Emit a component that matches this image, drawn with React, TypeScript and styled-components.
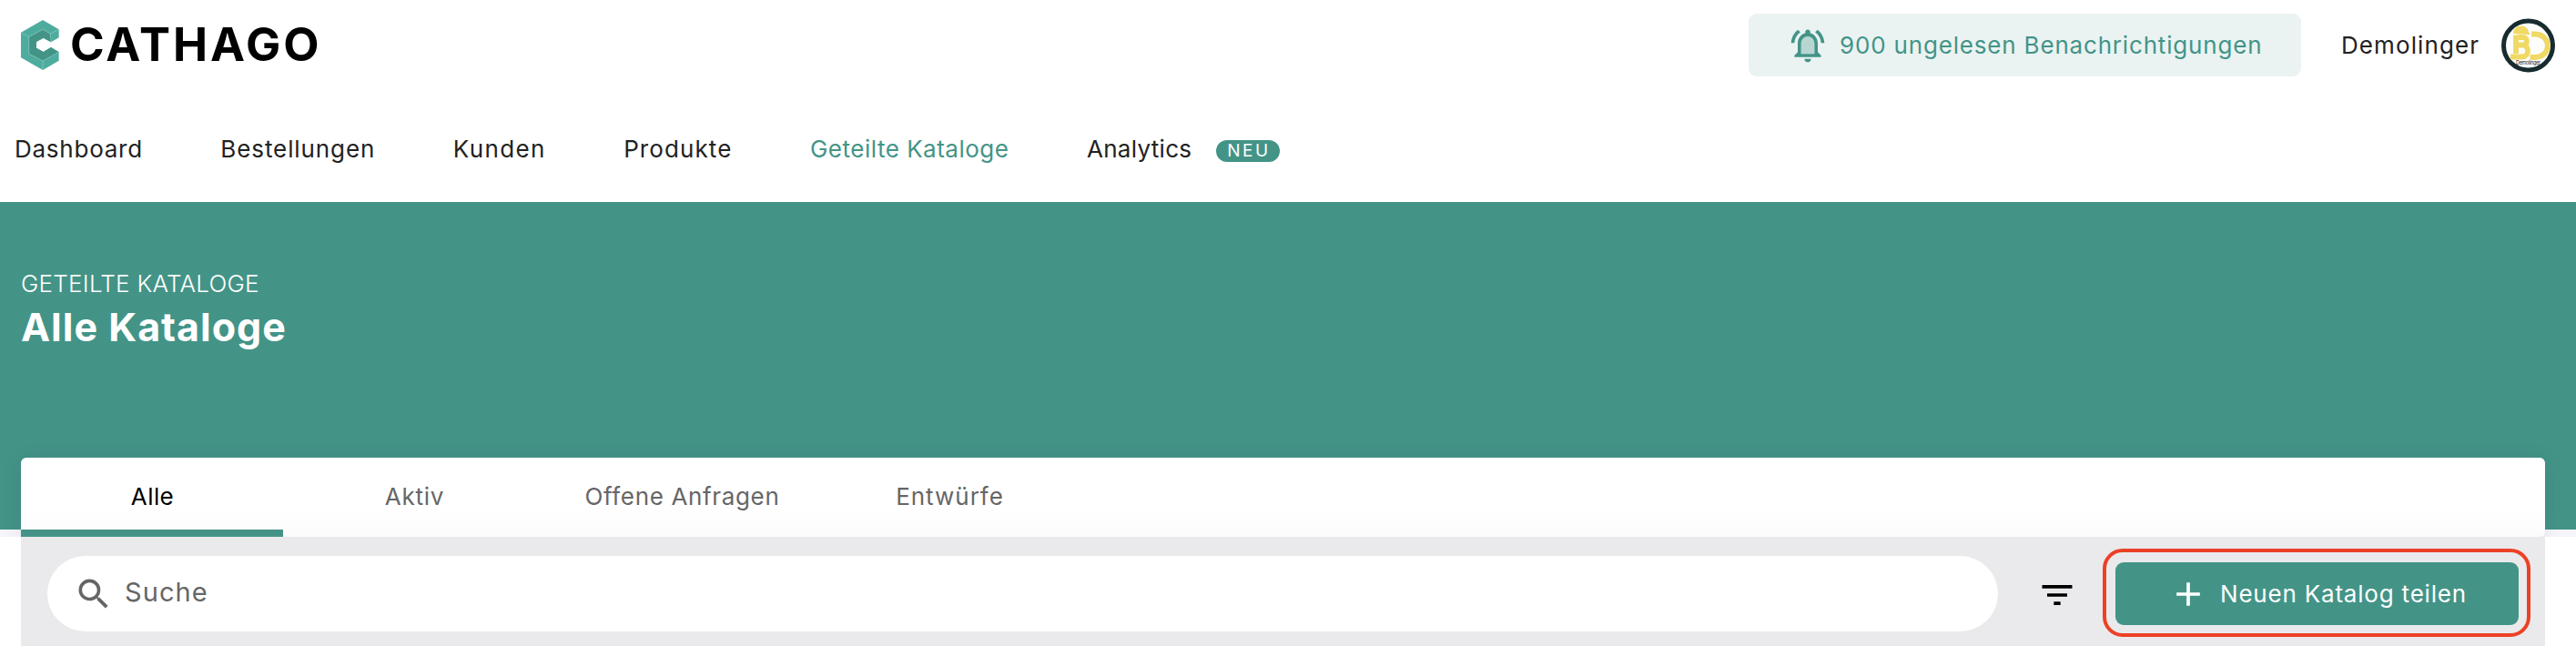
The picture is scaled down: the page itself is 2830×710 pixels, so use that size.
import React, { useState } from "react";
import styled, { createGlobalStyle } from "styled-components";
import { MdAdd, MdFilterList, MdSearch } from "react-icons/md";

interface INavItem {
  label: string;
  spacing: number;
  badge?: string;
}

interface ITab {
  label: string;
  width: number;
  spacing: number;
}

const GlobalStyle = createGlobalStyle`
  * {
    box-sizing: border-box;
  }
  body {
    margin: 0;
    background-color: white;
    font-family: "Inter", sans-serif;
    font-size: 26px;
    line-height: 1.2;
    color: #222;
  }
  button {
    border: none;
    background: none;
    padding: 0;
    font: inherit;
    color: inherit;
  }
`;

const Page = styled.div`
  height: 710px;
  overflow: hidden;
`;

const TopBar = styled.header`
  height: 99px;
  padding: 0 23px 0 22px;
  display: flex;
  align-items: center;
`;

const Brand = styled.div`
  display: flex;
  align-items: center;
  margin-right: auto;
`;

const BrandName = styled.span`
  margin: -1px 0 0 11px;
  font-size: 51px;
  font-weight: 700;
  letter-spacing: 3px;
  color: black;
`;

const Notifications = styled.button`
  width: 607px;
  height: 69px;
  padding-left: 43px;
  display: flex;
  align-items: center;
  gap: 13px;
  border-radius: 9px;
  background-color: #eaf3f2;
  color: #439487;
  letter-spacing: 0.82px;
  white-space: nowrap;
`;

const UserName = styled.span`
  width: 176px;
  margin-left: 44px;
  letter-spacing: 1.1px;
`;

const Nav = styled.nav`
  height: 123px;
  padding: 7px 0 0 16px;
  display: flex;
  align-items: center;
  gap: 85.5px;
`;

const NavItem = styled.a<{ $active: boolean; $spacing: number }>`
  display: flex;
  align-items: center;
  color: ${(p) => (p.$active ? "#439487" : "#222")};
  letter-spacing: ${(p) => p.$spacing}px;
  white-space: nowrap;
`;

const Badge = styled.span`
  width: 70px;
  height: 24px;
  margin: 4px 0 0 27px;
  padding-left: 12px;
  border-radius: 12px;
  background-color: #439487;
  color: white;
  font-size: 19px;
  line-height: 23px;
  letter-spacing: 2.4px;
`;

const Hero = styled.section`
  height: 368px;
  padding: 0 34px 0 23px;
  display: flex;
  flex-direction: column;
  overflow: hidden;
  background: linear-gradient(#439487 360px, #f6f5fa 360px);
`;

const Overline = styled.div`
  margin-top: 75px;
  font-weight: 300;
  line-height: 30px;
  letter-spacing: 0.25px;
  color: white;
`;

const Title = styled.h1`
  margin: 7px 0 0;
  font-size: 43px;
  font-weight: 700;
  line-height: 50px;
  letter-spacing: 1px;
  color: white;
`;

const Tabs = styled.div`
  height: 87px;
  margin-top: auto;
  display: flex;
  border-radius: 6px 6px 6px 0;
  background: linear-gradient(white 60%, #fcfcfc);
  box-shadow: 0 2px 20px rgba(50, 40, 80, 0.12);
`;

const Tab = styled.button<{ $active: boolean; $width: number; $spacing: number }>`
  width: ${(p) => p.$width}px;
  padding: 6px 0 0 1px;
  border-bottom: 8px solid ${(p) => (p.$active ? "#439487" : "transparent")};
  color: ${(p) => (p.$active ? "black" : "#666")};
  letter-spacing: ${(p) => p.$spacing}px;
`;

const Toolbar = styled.section`
  height: 120px;
  margin: 0 34px 0 23px;
  padding: 13px 16px 10px 29px;
  display: flex;
  align-items: center;
  background-color: #eaeaec;
`;

const SearchField = styled.label`
  width: 2143px;
  height: 83px;
  margin-top: 2px;
  padding-left: 28.5px;
  display: flex;
  align-items: center;
  gap: 12.5px;
  border-radius: 42px;
  background-color: white;
  color: #666;
`;

const SearchInput = styled.input`
  flex: 1;
  margin-top: -4px;
  padding: 0;
  border: none;
  outline: none;
  background: none;
  font-family: inherit;
  font-size: 29px;
  letter-spacing: 1.1px;

  &::placeholder {
    color: #666;
    opacity: 1;
  }
`;

const FilterButton = styled.button`
  width: 44px;
  height: 44px;
  margin: 5px 28.5px 0 42.5px;
  color: black;
`;

const Highlight = styled.div`
  width: 470px;
  height: 97px;
  padding: 11px 9px 9px 10px;
  border: 4px solid #ec4126;
  border-radius: 22px;
`;

const ShareButton = styled.button`
  width: 443px;
  height: 69px;
  padding-left: 58px;
  display: flex;
  align-items: center;
  gap: 13px;
  border-radius: 9px;
  background-color: #439487;
  color: white;
  letter-spacing: 0.8px;
  white-space: nowrap;
`;

const navItems: INavItem[] = [
  { label: "Dashboard", spacing: 0.75 },
  { label: "Bestellungen", spacing: 0.9 },
  { label: "Kunden", spacing: 1.35 },
  { label: "Produkte", spacing: 1.1 },
  { label: "Geteilte Kataloge", spacing: 0.5 },
  { label: "Analytics", spacing: 0.3, badge: "NEU" },
];

const tabs: ITab[] = [
  { label: "Alle", width: 288, spacing: 0.4 },
  { label: "Aktiv", width: 288, spacing: 0.75 },
  { label: "Offene Anfragen", width: 300, spacing: 0.65 },
  { label: "Entwürfe", width: 288, spacing: 1 },
];

const Logo = () => (
  <svg width="44" height="57" viewBox="66 63 132 171">
    <path d="M141 66L194 97V124L168 139L143 125L120 138V158L143 171L168 156L194 172V200L141 231L69 190V107Z" fill="#4eac9e" />
    <path d="M95 122L141 97L166 111L168 139L143 125L120 138V158L143 171L168 156L194 172L141 201L95 177Z" fill="#439487" />
    <path
      d="M69 107L95 122M95 177V122L141 97L166 111L194 97M166 111L168 139M95 177L141 201L194 172M141 201V231"
      fill="none"
      stroke="#8ed0c5"
      strokeWidth="2"
    />
  </svg>
);

const BellIcon = () => (
  <svg width="44" height="44" viewBox="0 0 24 24" fill="currentColor">
    <path d="M12 6.5c-2.49 0-4 2.02-4 4.5v6h8v-6c0-2.48-1.51-4.5-4-4.5z" opacity=".3" />
    <path d="M12 22c1.1 0 2-.9 2-2h-4c0 1.1.9 2 2 2zm6-6v-5c0-3.07-1.63-5.64-4.5-6.32V4c0-.83-.67-1.5-1.5-1.5s-1.5.67-1.5 1.5v.68C7.64 5.36 6 7.92 6 11v5l-2 2v1h16v-1l-2-2zm-2 1H8v-6c0-2.48 1.51-4.5 4-4.5s4 2.02 4 4.5v6zM7.58 4.08L6.15 2.65C3.75 4.48 2.17 7.3 2.03 10.5h2c.15-2.65 1.51-4.97 3.55-6.42zm12.39 6.42h2c-.15-3.2-1.73-6.02-4.12-7.85l-1.42 1.43c2.02 1.45 3.39 3.77 3.54 6.42z" />
  </svg>
);

const Avatar = () => (
  <svg width="59" height="60" viewBox="0 0 59 60">
    <circle cx="29.5" cy="30" r="27" fill="#fdfdfc" stroke="#182c30" strokeWidth="5" />
    {/* Helm */}
    <path d="M13 17C13 11.5 17 8.5 21.5 8.5S29.5 11 30 15.5L32 17.5L30.5 18L13 17Z" fill="#f0d964" />
    {/* B */}
    <path
      d="M16 18.5V39M18 21H23.5C29.5 21 29.5 29.5 23.5 29.5H18M23.5 29.5C31 30 31 42 23 42.5H10"
      fill="none"
      stroke="#f0d964"
      strokeWidth="5.8"
    />
    {/* D */}
    <path d="M33 17.5H37C55.5 18 55.5 42.5 37 43H31.5" fill="none" stroke="#f0d964" strokeWidth="5.8" />
    <text x="16" y="50.5" fontSize="5.5" textLength="27" fill="#222">
      Demolinger
    </text>
  </svg>
);

function App() {
  const [activeTab, setActiveTab] = useState("Alle");
  return (
    <Page>
      <GlobalStyle />
      <TopBar>
        <Brand>
          <Logo />
          <BrandName>CATHAGO</BrandName>
        </Brand>
        <Notifications>
          <BellIcon />
          900 ungelesen Benachrichtigungen
        </Notifications>
        <UserName>Demolinger</UserName>
        <Avatar />
      </TopBar>
      <Nav>
        {navItems.map((item) => (
          <NavItem key={item.label} $active={item.label === "Geteilte Kataloge"} $spacing={item.spacing}>
            {item.label}
            {item.badge && <Badge>{item.badge}</Badge>}
          </NavItem>
        ))}
      </Nav>
      <Hero>
        <Overline>GETEILTE KATALOGE</Overline>
        <Title>Alle Kataloge</Title>
        <Tabs>
          {tabs.map((tab) => (
            <Tab
              key={tab.label}
              $active={tab.label === activeTab}
              $width={tab.width}
              $spacing={tab.spacing}
              onClick={() => setActiveTab(tab.label)}
            >
              {tab.label}
            </Tab>
          ))}
        </Tabs>
      </Hero>
      <Toolbar>
        <SearchField>
          <MdSearch size={44} />
          <SearchInput placeholder="Suche" />
        </SearchField>
        <FilterButton>
          <MdFilterList size={44} />
        </FilterButton>
        <Highlight>
          <ShareButton>
            <MdAdd size={44} />
            Neuen Katalog teilen
          </ShareButton>
        </Highlight>
      </Toolbar>
    </Page>
  );
}

export default App;
